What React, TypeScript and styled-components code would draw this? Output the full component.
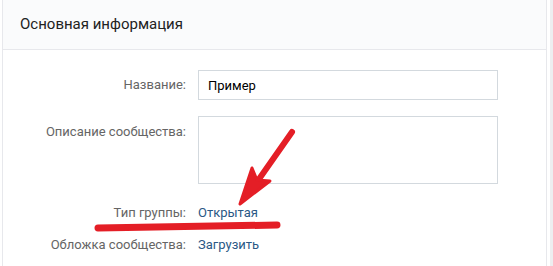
import React from 'react'
import styled, { createGlobalStyle } from 'styled-components'

const GlobalStyle = createGlobalStyle`
    body {
        margin: 0;
        background: #ffffff;
        font-family: Roboto, "Open Sans", sans-serif;
    }
`

const Page = styled.div`
    position: relative;
    width: 553px;
    height: 266px;
    overflow: hidden;
    padding-left: 2px;
    box-sizing: border-box;
    background: linear-gradient(to right, #ffffff 0, #ffffff 550px, #edeef0 550px);
`

const Card = styled.div`
    width: 545px;
    height: 280px;
    box-sizing: border-box;
    background: #ffffff;
    border: 1px solid #e7e8ec;
    border-top: none;
`

const Header = styled.div`
    height: 50px;
    box-sizing: border-box;
    padding: 15px 0 0 17px;
    background: #fafbfc;
    border-bottom: 1px solid #e7e8ec;
    font-size: 15px;
    color: #222222;
`

const Form = styled.div`
    display: flex;
    flex-direction: column;
    padding-top: 20px;
`

const Row = styled.div<{ $gap: number }>`
    display: flex;
    align-items: flex-start;
    margin-bottom: ${({ $gap }) => $gap}px;
`

const Label = styled.div<{ $top: number }>`
    width: 195px;
    padding-top: ${({ $top }) => $top}px;
    padding-right: 12px;
    box-sizing: border-box;
    text-align: right;
    font-size: 13px;
    color: #656565;
`

const Input = styled.div`
    width: 300px;
    height: 30px;
    box-sizing: border-box;
    border: 1px solid #d3d9de;
    padding: 7px 9px;
    font-size: 13px;
    color: #000000;
`

const TextArea = styled.div`
    width: 300px;
    height: 68px;
    box-sizing: border-box;
    border: 1px solid #d3d9de;
`

const Link = styled.div`
    font-size: 13px;
    color: #2a5885;
`

const Marks = styled.svg`
    position: absolute;
    left: 0;
    top: 0;
    pointer-events: none;
`

export default function App() {
    return (
        <Page>
            <GlobalStyle />
            <Card>
                <Header>Основная информация</Header>
                <Form>
                    <Row $gap={16}>
                        <Label $top={7}>Название:</Label>
                        <Input>Пример</Input>
                    </Row>
                    <Row $gap={21}>
                        <Label $top={8}>Описание сообщества:</Label>
                        <TextArea />
                    </Row>
                    <Row $gap={17}>
                        <Label $top={0}>Тип группы:</Label>
                        <Link>Открытая</Link>
                    </Row>
                    <Row $gap={0}>
                        <Label $top={0}>Обложка сообщества:</Label>
                        <Link>Загрузить</Link>
                    </Row>
                </Form>
            </Card>
            <Marks width="553" height="266">
                <path d="M98 228 L277 225" stroke="#e41e26" strokeWidth="7" strokeLinecap="round" fill="none" />
                <path d="M292 132 L250 192" stroke="#e41e26" strokeWidth="6" strokeLinecap="round" fill="none" />
                <path d="M240 204 L252 168 L257 180 L270 181 Z" fill="#e41e26" stroke="#e41e26" strokeWidth="3" strokeLinejoin="round" />
            </Marks>
        </Page>
    )
}
